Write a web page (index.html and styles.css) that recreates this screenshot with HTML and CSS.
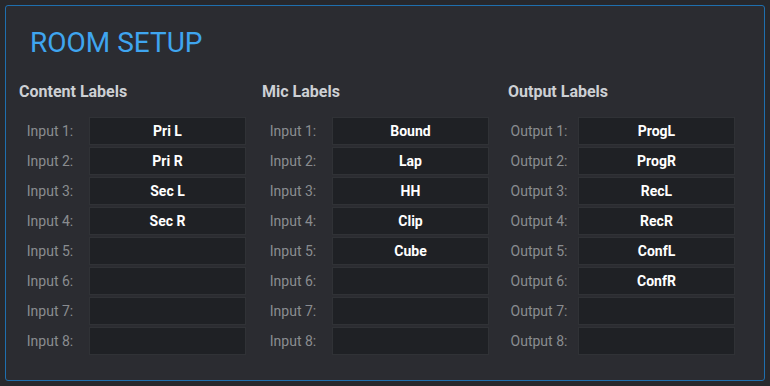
FILE: index.html
```html
<!DOCTYPE html>
<html lang="en">
<head>
    <meta charset="UTF-8">
    <title>Room Setup</title>
    <link rel="stylesheet" href="styles.css">
</head>
<body>
    <div class="panel">
        <h1 class="title">ROOM SETUP</h1>
        <div class="columns">
            <div class="group">
                <h2>Content Labels</h2>
                <div class="rows">
                    <span class="label">Input 1:</span><div class="field">Pri L</div>
                    <span class="label">Input 2:</span><div class="field">Pri R</div>
                    <span class="label">Input 3:</span><div class="field">Sec L</div>
                    <span class="label">Input 4:</span><div class="field">Sec R</div>
                    <span class="label">Input 5:</span><div class="field"></div>
                    <span class="label">Input 6:</span><div class="field"></div>
                    <span class="label">Input 7:</span><div class="field"></div>
                    <span class="label">Input 8:</span><div class="field"></div>
                </div>
            </div>
            <div class="group">
                <h2>Mic Labels</h2>
                <div class="rows">
                    <span class="label">Input 1:</span><div class="field">Bound</div>
                    <span class="label">Input 2:</span><div class="field">Lap</div>
                    <span class="label">Input 3:</span><div class="field">HH</div>
                    <span class="label">Input 4:</span><div class="field">Clip</div>
                    <span class="label">Input 5:</span><div class="field">Cube</div>
                    <span class="label">Input 6:</span><div class="field"></div>
                    <span class="label">Input 7:</span><div class="field"></div>
                    <span class="label">Input 8:</span><div class="field"></div>
                </div>
            </div>
            <div class="group">
                <h2>Output Labels</h2>
                <div class="rows">
                    <span class="label">Output 1:</span><div class="field">ProgL</div>
                    <span class="label">Output 2:</span><div class="field">ProgR</div>
                    <span class="label">Output 3:</span><div class="field">RecL</div>
                    <span class="label">Output 4:</span><div class="field">RecR</div>
                    <span class="label">Output 5:</span><div class="field">ConfL</div>
                    <span class="label">Output 6:</span><div class="field">ConfR</div>
                    <span class="label">Output 7:</span><div class="field"></div>
                    <span class="label">Output 8:</span><div class="field"></div>
                </div>
            </div>
        </div>
    </div>
</body>
</html>
```

FILE: styles.css
```css
body {
    margin: 0;
    padding: 5px;
    background-color: #27282c;
    font-family: Roboto, "Liberation Sans", sans-serif;
}
.panel {
    box-sizing: border-box;
    width: 760px;
    height: 376px;
    padding: 21px 13px 0 13px;
    background-color: #2b2c31;
    border: 1px solid #1f6fae;
    border-radius: 3px;
}
.title {
    margin: 0 0 0 11px;
    font-size: 28px;
    line-height: 32px;
    font-weight: 400;
    color: #3fa5ef;
}
.columns {
    display: grid;
    grid-template-columns: 243px 246px 1fr;
    margin-top: 24px;
}
.group h2 {
    margin: 0 0 16px 0;
    font-size: 16px;
    line-height: 18px;
    font-weight: bold;
    color: #cdd0d4;
}
.rows {
    display: grid;
    grid-template-columns: 62px 157px;
    column-gap: 8px;
    row-gap: 2px;
    grid-auto-rows: 28px;
}
.label {
    display: flex;
    align-items: center;
    justify-content: center;
    font-size: 14px;
    color: #8a8c90;
    white-space: nowrap;
}
.field {
    box-sizing: border-box;
    display: flex;
    align-items: center;
    justify-content: center;
    background-color: #1f2125;
    border: 1px solid #303236;
    font-size: 14px;
    font-weight: bold;
    color: #ffffff;
}
```
